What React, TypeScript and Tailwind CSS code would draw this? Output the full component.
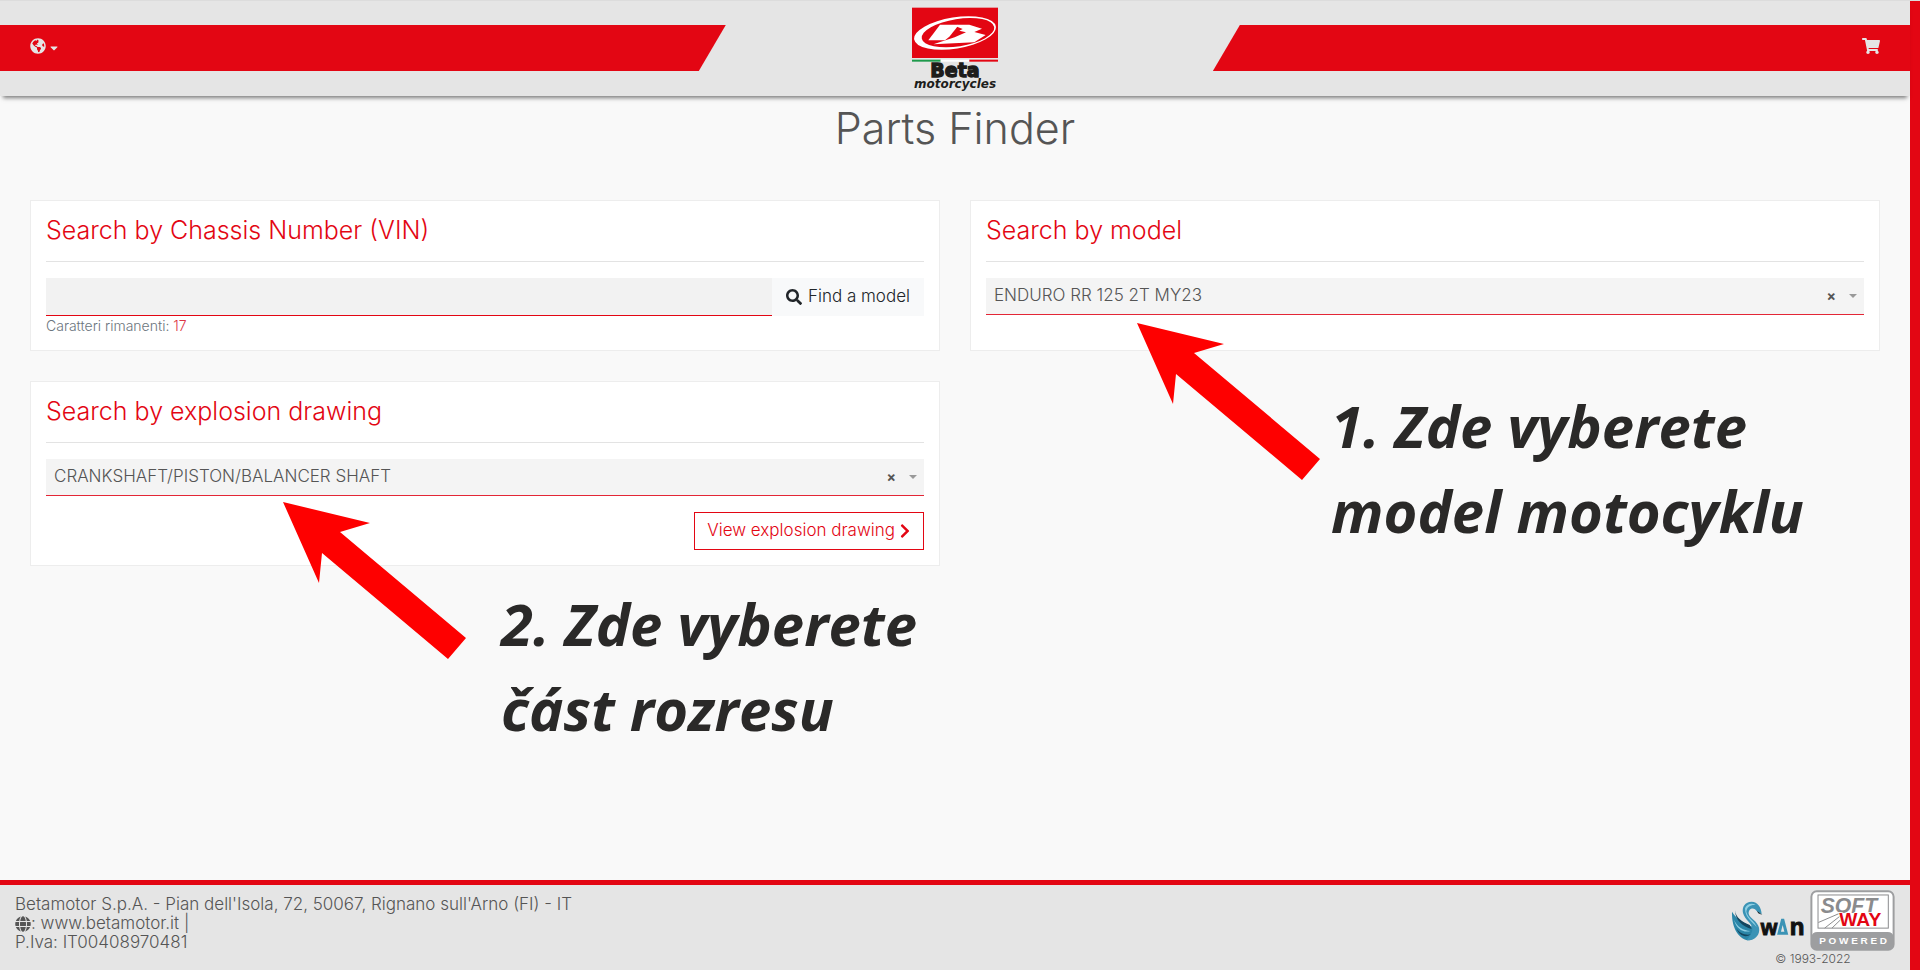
import React, { useState } from "react";
import {
  FaCaretDown,
  FaChevronRight,
  FaGlobe,
  FaGlobeAmericas,
  FaSearch,
  FaShoppingCart,
} from "react-icons/fa";

const VIN_LENGTH = 17;

const BetaLogo: React.FC = () => (
  <svg viewBox="276 21 258 252" className="w-[86px] h-[84px]" aria-hidden="true">
    <rect x="276" y="23" width="258" height="151" fill="#e30613" />
    <ellipse cx="405" cy="99" rx="124" ry="47" transform="rotate(-9 405 99)" fill="#fff" />
    <ellipse cx="414" cy="98" rx="110" ry="41" transform="rotate(-9 414 98)" fill="#e30613" />
    <path d="M360 74H412V80L388 110L375 121H325Z" fill="#fff" />
    <path
      d="M411 74H448L486 86L463 96L497 105L463 127L340 133L404 112L438 97L418 92L428 87L411 80Z"
      fill="#fff"
    />
    {/* Italian flag stripe */}
    <rect x="276" y="179" width="86" height="6" fill="#1f9a4c" />
    <rect x="362" y="179" width="86" height="6" fill="#fff" />
    <rect x="448" y="179" width="86" height="6" fill="#e30613" />
    <text
      x="405"
      y="232"
      textAnchor="middle"
      fontFamily="DejaVu Sans, sans-serif"
      fontWeight="700"
      fontSize="57"
      fill="#1d1d1b"
      stroke="#1d1d1b"
      strokeWidth="4"
    >
      Beta
    </text>
    <text
      x="405"
      y="264"
      textAnchor="middle"
      fontFamily="DejaVu Sans, sans-serif"
      fontWeight="700"
      fontStyle="italic"
      fontSize="36"
      fill="#1d1d1b"
    >
      motorcycles
    </text>
  </svg>
);

const SwanLogo: React.FC = () => (
  <svg viewBox="94 120 222 120" className="w-[74px] h-10" aria-hidden="true">
    {/* wing feathers */}
    <path d="M97 152C96 186 106 226 142 238C168 240 176 214 160 198C138 188 112 178 97 152Z" fill="#2b86a8" />
    <path d="M106 148C108 170 128 184 150 192L156 204C130 198 106 178 106 148Z" fill="#14465f" />
    <path d="M103 176C112 198 132 208 152 210C132 216 110 204 103 176Z" fill="#8fd0e4" />
    <path d="M110 202C120 218 138 224 154 220C138 232 118 224 110 202Z" fill="#14465f" />
    {/* neck and head */}
    <path
      d="M142 238C168 238 182 220 178 200C174 180 150 172 147 158C146 146 156 138 166 145C172 152 177 156 186 160C185 138 174 123 156 122C136 122 126 138 130 156C136 178 158 186 158 204C158 220 146 228 142 238Z"
      fill="#3b93b5"
    />
    <path d="M136 142C140 130 156 124 168 132C154 130 142 136 140 152C144 172 164 178 171 198C160 184 136 172 136 142Z" fill="#8fd0e4" />
    <path d="M172 150L188 162L176 157Z" fill="#111" />
    <text
      x="183"
      y="221"
      fontFamily="Liberation Sans, sans-serif"
      fontWeight="700"
      fontSize="64"
      fill="#111"
      stroke="#111"
      strokeWidth="3"
    >
      w
    </text>
    <path d="M249 174L260 217H238Z" fill="none" stroke="#3b93b5" strokeWidth="9" />
    <text
      x="270"
      y="221"
      fontFamily="Liberation Sans, sans-serif"
      fontWeight="700"
      fontSize="72"
      fill="#111"
      stroke="#111"
      strokeWidth="3"
    >
      n
    </text>
  </svg>
);

const SoftwayLogo: React.FC = () => (
  <svg viewBox="330 90 256 184" className="w-[85px] h-[61px]" aria-hidden="true">
    <rect x="334" y="94" width="248" height="176" rx="16" fill="#fff" stroke="#9d9ea0" strokeWidth="6" />
    <path d="M334 232Q336 217 352 217H564Q580 217 582 232V256Q580 270 566 270H350Q336 270 334 256Z" fill="#9d9ea0" />
    <rect x="354" y="105" width="212" height="100" fill="none" stroke="#8a8b8d" strokeWidth="3" />
    <path d="M355 188L420 160M374 205L424 166M396 205L430 172" stroke="#8a8b8d" strokeWidth="3" />
    <text
      x="362"
      y="158"
      fontFamily="Liberation Sans, sans-serif"
      fontWeight="700"
      fontStyle="italic"
      fontSize="64"
      fill="#8a8b8d"
    >
      SOFT
    </text>
    <text
      x="418"
      y="200"
      fontFamily="Liberation Sans, sans-serif"
      fontWeight="700"
      fontSize="58"
      fill="#e30613"
      stroke="#fff"
      strokeWidth="5"
      paintOrder="stroke"
    >
      WAY
    </text>
    <text
      x="460"
      y="254"
      textAnchor="middle"
      fontFamily="Liberation Sans, sans-serif"
      fontWeight="700"
      fontSize="30"
      fill="#fff"
    >
      P O W E R E D
    </text>
  </svg>
);

const Arrow: React.FC<{ className: string }> = ({ className }) => (
  <svg viewBox="0 0 183 157" className={`absolute w-[183px] h-[157px] ${className}`} aria-hidden="true">
    <path d="M0 0L87 21L57 30L183 136L165 157L39 51L36 81Z" fill="#fe0000" />
  </svg>
);

const Note: React.FC<{ className: string; children: React.ReactNode }> = ({ className, children }) => (
  <p
    className={`absolute whitespace-nowrap font-['Open_Sans',sans-serif] font-bold italic text-[58px] leading-[85px] text-[#2a2928] ${className}`}
  >
    {children}
  </p>
);

interface CardProps {
  title: string;
  field: string;
  children: React.ReactNode;
}

const Card: React.FC<CardProps> = ({ title, field, children }) => (
  <section className="relative bg-white border border-[#ededed] p-[15px]">
    <h2 className="text-[25px] leading-[29px] font-light text-[#e30613]">
      <label htmlFor={field}>{title}</label>
    </h2>
    <hr className="my-4 border-[#e3e3e3]" />
    {children}
  </section>
);

interface PickerProps {
  id: string;
  options: string[];
}

const Picker: React.FC<PickerProps> = ({ id, options }) => {
  const [value, setValue] = useState(options[0]);

  return (
    <div className="relative">
      <select
        id={id}
        value={value}
        onChange={(e) => setValue(e.target.value)}
        className="block w-full h-[37px] appearance-none rounded-none bg-[#f4f4f4] border-b border-[#e32636] pl-2 pr-16 text-[17px] font-light text-[#555] outline-none"
      >
        <option value=""></option>
        {options.map((option) => (
          <option key={option}>{option}</option>
        ))}
      </select>
      <button
        type="button"
        aria-label="Clear"
        onClick={() => setValue("")}
        className="absolute right-7 top-2 text-sm leading-5 font-bold text-[#555]"
      >
        ×
      </button>
      <svg
        viewBox="0 0 8 4"
        className="absolute right-[7px] top-4 w-2 h-1 pointer-events-none"
        aria-hidden="true"
      >
        <path d="M0 0H8L4 4Z" fill="#999" />
      </svg>
    </div>
  );
};

const App: React.FC = () => {
  const [vin, setVin] = useState("");

  return (
    <div className="flex min-h-screen bg-[#f9f9f9] border-t border-[#dcdcdc] font-[Inter,sans-serif] font-light text-[#555]">
      <div className="flex flex-col flex-1 min-w-0">
        <header className="relative flex justify-between h-[95px] pt-6 bg-[#e5e5e5] shadow-[0_5px_4px_-3px_rgba(0,0,0,0.5)]">
          <div className="flex items-center w-[38%] h-[46px] pl-[30px] pb-1 bg-[#e30613] [clip-path:polygon(0_0,100%_0,calc(100%-27px)_100%,0_100%)]">
            <button type="button" aria-label="Language" className="flex items-end text-[#e5e5e5]">
              <FaGlobeAmericas className="w-4 h-4" />
              <FaCaretDown className="w-3 h-3 ml-[2px]" />
            </button>
          </div>
          <a href="#" aria-label="Beta" className="absolute left-1/2 top-[6px] -translate-x-1/2">
            <BetaLogo />
          </a>
          <div className="flex items-center justify-end w-[36.5%] h-[46px] pr-[30px] pb-1 bg-[#e30613] [clip-path:polygon(27px_0,100%_0,100%_100%,0_100%)]">
            <a href="#" aria-label="Cart" className="text-[#e5e5e5]">
              <FaShoppingCart className="w-[18px] h-4" />
            </a>
          </div>
        </header>

        <main className="px-[30px] pt-2 pb-8">
          <h1 className="mb-12 text-center text-[43px] leading-12 font-light">Parts Finder</h1>

          <div className="grid grid-cols-2 gap-[30px]">
            <Card title="Search by Chassis Number (VIN)" field="vin">
              <div className="flex">
                <input
                  id="vin"
                  type="text"
                  maxLength={VIN_LENGTH}
                  value={vin}
                  onChange={(e) => setVin(e.target.value)}
                  className="flex-1 min-w-0 h-[38px] px-2 bg-[#f2f2f2] border-b border-[#e30613] outline-none"
                />
                <button
                  type="button"
                  className="flex items-center gap-[6px] h-[38px] px-[14px] bg-[#f8f9fa] text-[17px] text-[#212529]"
                >
                  <FaSearch className="w-4 h-4" />
                  Find a model
                </button>
              </div>
              <p className="text-[14px] leading-[19px] text-[#6c757d]">
                Caratteri rimanenti:{" "}
                <span className="text-[#dc3545]">{VIN_LENGTH - vin.length}</span>
              </p>
            </Card>

            <Card title="Search by model" field="model">
              <Picker id="model" options={["ENDURO RR 125 2T MY23"]} />
              <Arrow className="left-[166px] top-[122px]" />
              <Note className="left-[360px] top-[182px]">
                1. Zde vyberete
                <br />
                model motocyklu
              </Note>
            </Card>

            <Card title="Search by explosion drawing" field="drawing">
              <Picker id="drawing" options={["CRANKSHAFT/PISTON/BALANCER SHAFT"]} />
              <div className="flex justify-end mt-4">
                <button
                  type="button"
                  className="flex items-center gap-1 h-[38px] px-3 border border-[#e30613] text-[17px] text-[#e30613]"
                >
                  View explosion drawing
                  <FaChevronRight className="w-3 h-4" />
                </button>
              </div>
              <Arrow className="left-[252px] top-[120px]" />
              <Note className="left-[470px] top-[199px]">
                2. Zde vyberete
                <br />
                část rozresu
              </Note>
            </Card>
          </div>
        </main>

        <footer className="flex justify-between mt-auto px-[15px] bg-[#e5e5e5] border-t-5 border-[#e30613]">
          <div className="pt-[10px] text-[17px] leading-[19px]">
            <p>Betamotor S.p.A. - Pian dell'Isola, 72, 50067, Rignano sull'Arno (FI) - IT</p>
            <p className="flex items-center">
              <FaGlobe className="w-4 h-4" />
              <span className="whitespace-pre">: </span>
              <a href="#">www.betamotor.it</a>
              <span className="whitespace-pre"> |</span>
            </p>
            <p>P.Iva: IT00408970481</p>
          </div>
          <div className="flex flex-col items-center pt-[5px] pb-1">
            <div className="flex items-center gap-[5px]">
              <SwanLogo />
              <SoftwayLogo />
            </div>
            <p className="text-xs leading-[15px]">© 1993-2022</p>
          </div>
        </footer>
      </div>
      <div className="w-[10px] bg-[#e30613]" />
    </div>
  );
};

export default App;
